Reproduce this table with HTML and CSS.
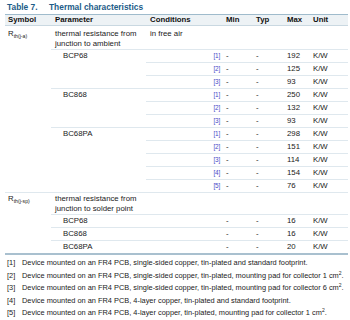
FILE: index.html
```html
<!DOCTYPE html>
<html>
<head>
<meta charset="utf-8">
<link rel="stylesheet" href="styles.css">
</head>
<body>
<div class="page">
  <div class="title"><span class="tnum">Table 7.</span><span>Thermal characteristics</span></div>
  <table class="tbl">
    <colgroup>
      <col class="c-sym"><col class="c-par"><col class="c-con"><col class="c-min"><col class="c-typ"><col class="c-max"><col class="c-unit">
    </colgroup>
    <thead>
      <tr class="hdr"><th>Symbol</th><th>Parameter</th><th>Conditions</th><th>Min</th><th>Typ</th><th>Max</th><th>Unit</th></tr>
    </thead>
    <tbody>
      <tr class="prow ja">
        <td class="sym edge" rowspan="12">R<sub>th(j-a)</sub></td>
        <td class="ln">thermal resistance from<br>junction to ambient</td>
        <td class="ln">in free air</td><td class="ln"></td><td class="ln"></td><td class="ln"></td><td class="ln"></td>
      </tr>
      <tr class="drow"><td class="dev ln" rowspan="3">BCP68</td><td class="con ln"><span class="ref">[1]</span></td><td class="ln">-</td><td class="ln">-</td><td class="ln">192</td><td class="ln">K/W</td></tr>
      <tr class="drow"><td class="con ln"><span class="ref">[2]</span></td><td class="ln">-</td><td class="ln">-</td><td class="ln">125</td><td class="ln">K/W</td></tr>
      <tr class="drow"><td class="con ln"><span class="ref">[3]</span></td><td class="ln">-</td><td class="ln">-</td><td class="ln">93</td><td class="ln">K/W</td></tr>
      <tr class="drow"><td class="dev ln" rowspan="3">BC868</td><td class="con ln"><span class="ref">[1]</span></td><td class="ln">-</td><td class="ln">-</td><td class="ln">250</td><td class="ln">K/W</td></tr>
      <tr class="drow"><td class="con ln"><span class="ref">[2]</span></td><td class="ln">-</td><td class="ln">-</td><td class="ln">132</td><td class="ln">K/W</td></tr>
      <tr class="drow"><td class="con ln"><span class="ref">[3]</span></td><td class="ln">-</td><td class="ln">-</td><td class="ln">93</td><td class="ln">K/W</td></tr>
      <tr class="drow"><td class="dev ln" rowspan="5">BC68PA</td><td class="con ln"><span class="ref">[1]</span></td><td class="ln">-</td><td class="ln">-</td><td class="ln">298</td><td class="ln">K/W</td></tr>
      <tr class="drow"><td class="con ln"><span class="ref">[2]</span></td><td class="ln">-</td><td class="ln">-</td><td class="ln">151</td><td class="ln">K/W</td></tr>
      <tr class="drow"><td class="con ln"><span class="ref">[3]</span></td><td class="ln">-</td><td class="ln">-</td><td class="ln">114</td><td class="ln">K/W</td></tr>
      <tr class="drow"><td class="con ln"><span class="ref">[4]</span></td><td class="ln">-</td><td class="ln">-</td><td class="ln">154</td><td class="ln">K/W</td></tr>
      <tr class="drow"><td class="con ln"><span class="ref">[5]</span></td><td class="ln">-</td><td class="ln">-</td><td class="ln">76</td><td class="ln">K/W</td></tr>
      <tr class="prow sp">
        <td class="sym end" rowspan="4">R<sub>th(j-sp)</sub></td>
        <td class="ln">thermal resistance from<br>junction to solder point</td>
        <td class="ln"></td><td class="ln"></td><td class="ln"></td><td class="ln"></td><td class="ln"></td>
      </tr>
      <tr class="drow"><td class="dev ln">BCP68</td><td class="ln"></td><td class="ln">-</td><td class="ln">-</td><td class="ln">16</td><td class="ln">K/W</td></tr>
      <tr class="drow"><td class="dev ln">BC868</td><td class="ln"></td><td class="ln">-</td><td class="ln">-</td><td class="ln">16</td><td class="ln">K/W</td></tr>
      <tr class="drow"><td class="dev end">BC68PA</td><td class="end"></td><td class="end">-</td><td class="end">-</td><td class="end">20</td><td class="end">K/W</td></tr>
    </tbody>
  </table>
  <ol class="notes">
    <li><span class="nr">[1]</span><span>Device mounted on an FR4 PCB, single-sided copper, tin-plated and standard footprint.</span></li>
    <li><span class="nr">[2]</span><span>Device mounted on an FR4 PCB, single-sided copper, tin-plated, mounting pad for collector 1 cm<sup>2</sup>.</span></li>
    <li><span class="nr">[3]</span><span>Device mounted on an FR4 PCB, single-sided copper, tin-plated, mounting pad for collector 6 cm<sup>2</sup>.</span></li>
    <li><span class="nr">[4]</span><span>Device mounted on an FR4 PCB, 4-layer copper, tin-plated and standard footprint.</span></li>
    <li><span class="nr">[5]</span><span>Device mounted on an FR4 PCB, 4-layer copper, tin-plated, mounting pad for collector 1 cm<sup>2</sup>.</span></li>
  </ol>
</div>
</body>
</html>
```
FILE: styles.css
```css
html, body { margin: 0; padding: 0; background: #fff; }
body { font-family: "Liberation Sans", Arial, sans-serif; color: #1a1a1a; font-size: 7.8px; }
.page { padding: 0 2px 0 5px; width: 343px; }
.title { height: 14px; line-height: 14px; font-weight: bold; color: #1d5c88; font-size: 8.4px; padding-left: 2px; display: flex; }
.tnum { width: 42px; }
.tbl { border-collapse: collapse; table-layout: fixed; width: 343px; font-size: 7.8px; }
.c-sym { width: 46px; } .c-par { width: 95px; } .c-con { width: 76px; }
.c-min { width: 30px; } .c-typ { width: 31px; } .c-max { width: 26px; } .c-unit { width: 39px; }
.tbl th, .tbl td { padding: 0 0 0 4px; text-align: left; vertical-align: middle; white-space: nowrap; }
.hdr th { height: 10px; line-height: 10px; background: #edf2f5; border-top: 1.5px solid #9fbbcc; border-bottom: 1px solid #c9d8e1; font-weight: bold; color: #111; }
.hdr th:first-child { padding-left: 3px; }
.prow td { height: 22px; vertical-align: top; padding-top: 3px; line-height: 10px; box-sizing: border-box; }
.prow.sp td { padding-top: 1px; }
.drow td { height: 12.8px; box-sizing: border-box; line-height: 12px; }
.sym { vertical-align: top !important; padding-left: 3px !important; line-height: 10px; }
.sym sub { font-size: 5.2px; vertical-align: -1.5px; }
.dev { vertical-align: top !important; padding-left: 12px !important; }
.con { text-align: right !important; padding-right: 2px !important; }
.ref { color: #4a4ac8; font-size: 6.4px; letter-spacing: -0.2px; }
.ln { border-bottom: 1px solid #dfe8ee; }
.edge { border-bottom: 1px solid #dfe8ee; }
.end { border-bottom: 2px solid #a9c0cf; }
.notes { list-style: none; margin: 2px 0 0 0; padding: 0 0 0 2px; }
.notes li { display: flex; line-height: 12.5px; height: 12.5px; font-size: 7.4px; white-space: nowrap; }
.nr { width: 15px; flex: none; }
.notes sup { font-size: 5px; vertical-align: 3px; line-height: 0; }
```
